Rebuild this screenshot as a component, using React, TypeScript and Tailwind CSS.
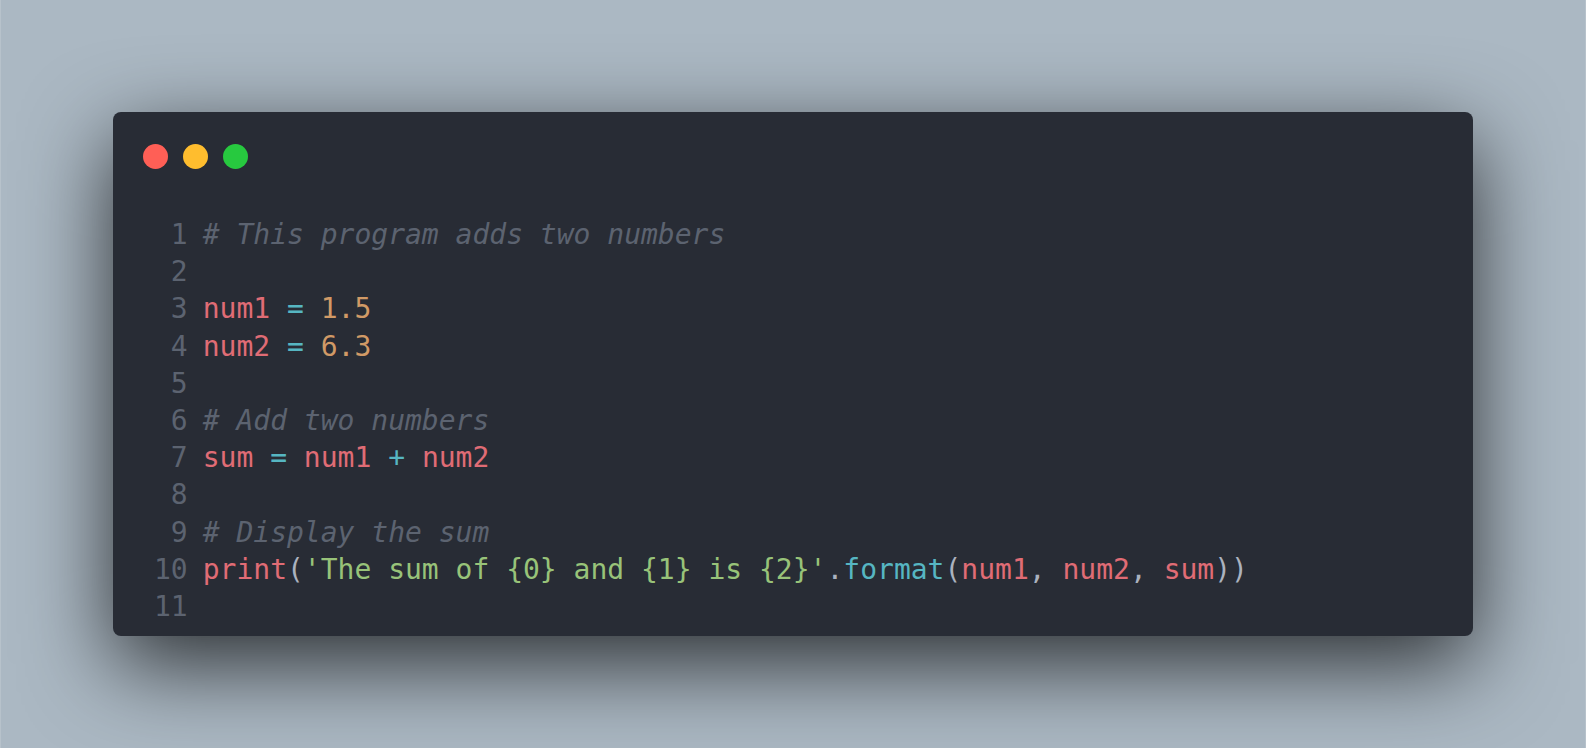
import React from 'react';

type Token = { text: string; color: string; italic?: boolean };

const RED = 'text-[#e06c75]';
const CYAN = 'text-[#56b6c2]';
const ORANGE = 'text-[#d19a66]';
const GREEN = 'text-[#98c379]';
const PUNCT = 'text-[#abb2bf]';
const COMMENT = 'text-[#5c6370]';

const lines: Token[][] = [
  [{ text: '# This program adds two numbers', color: COMMENT, italic: true }],
  [],
  [
    { text: 'num1', color: RED },
    { text: ' = ', color: CYAN },
    { text: '1.5', color: ORANGE },
  ],
  [
    { text: 'num2', color: RED },
    { text: ' = ', color: CYAN },
    { text: '6.3', color: ORANGE },
  ],
  [],
  [{ text: '# Add two numbers', color: COMMENT, italic: true }],
  [
    { text: 'sum', color: RED },
    { text: ' = ', color: CYAN },
    { text: 'num1', color: RED },
    { text: ' + ', color: CYAN },
    { text: 'num2', color: RED },
  ],
  [],
  [{ text: '# Display the sum', color: COMMENT, italic: true }],
  [
    { text: 'print', color: RED },
    { text: '(', color: PUNCT },
    { text: "'The sum of {0} and {1} is {2}'", color: GREEN },
    { text: '.', color: PUNCT },
    { text: 'format', color: CYAN },
    { text: '(', color: PUNCT },
    { text: 'num1', color: RED },
    { text: ', ', color: PUNCT },
    { text: 'num2', color: RED },
    { text: ', ', color: PUNCT },
    { text: 'sum', color: RED },
    { text: '))', color: PUNCT },
  ],
  [],
];

export default function App() {
  return (
    <div className="w-full h-[748px] bg-[#abb8c3] border-x border-[#b7c2cb] flex items-center justify-center">
      <div className="w-[1360px] h-[524px] bg-[#282c35] rounded-[8px] shadow-[0_28px_88px_rgba(0,0,0,0.75)] pt-[32px] pl-[30px]">
        {/* Window controls */}
        <div className="flex gap-[15px]">
          <span className="w-[25px] h-[25px] rounded-full bg-[#ff5f56]" />
          <span className="w-[25px] h-[25px] rounded-full bg-[#ffbd2e]" />
          <span className="w-[25px] h-[25px] rounded-full bg-[#27c93f]" />
        </div>

        {/* Code */}
        <div
          className="mt-[47px] ml-[11px] text-[28px] leading-[37.2px] whitespace-pre"
          style={{ fontFamily: '"DejaVu Sans Mono", "Liberation Mono", monospace' }}
        >
          {lines.map((tokens, i) => (
            <div key={i} className="flex">
              <span className="w-[2ch] text-right text-[#5c6370] mr-[15px]">{i + 1}</span>
              <span>
                {tokens.map((t, j) => (
                  <span key={j} className={`${t.color} ${t.italic ? 'italic' : ''}`}>
                    {t.text}
                  </span>
                ))}
              </span>
            </div>
          ))}
        </div>
      </div>
    </div>
  );
}
